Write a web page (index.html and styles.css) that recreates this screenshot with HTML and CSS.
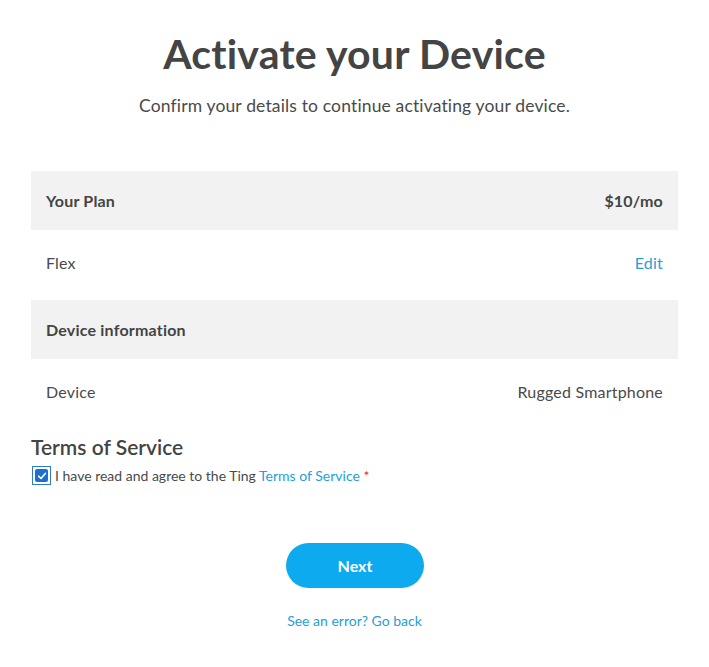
FILE: index.html
```html
<!DOCTYPE html>
<html>
<head>
<meta charset="utf-8">
<link rel="stylesheet" href="styles.css">
</head>
<body>
<main class="page">
  <h1 class="title">Activate your Device</h1>
  <p class="subtitle">Confirm your details to continue activating your device.</p>

  <section class="summary">
    <div class="row head"><span>Your Plan</span><span>$10/mo</span></div>
    <div class="row item"><span>Flex</span><a class="link" href="#">Edit</a></div>
    <div class="row head"><span>Device information</span></div>
    <div class="row item"><span>Device</span><span>Rugged Smartphone</span></div>
  </section>

  <section class="terms">
    <h2 class="terms-title">Terms of Service</h2>
    <label class="agree">
      <span class="check-outline"><span class="check-box"><svg viewBox="0 0 12 12" width="10" height="10"><path d="M2 6.3 L4.8 9 L10 3" fill="none" stroke="#fff" stroke-width="2" stroke-linecap="round" stroke-linejoin="round"/></svg></span></span>
      <span>I have read and agree to the Ting <a class="link" href="#">Terms of Service</a> <span class="req">*</span></span>
    </label>
  </section>

  <div class="actions">
    <button class="next">Next</button>
    <a class="back link" href="#">See an error? Go back</a>
  </div>
</main>
</body>
</html>
```
FILE: styles.css
```css
* { box-sizing: border-box; }
body {
  margin: 0;
  background: #fff;
  font-family: "Lato", "Open Sans", sans-serif;
  color: #474747;
}
.page {
  width: 647px;
  margin: 0 0 0 31px;
  padding-top: 28px;
  display: flex;
  flex-direction: column;
}
.title {
  margin: 0;
  text-align: center;
  font-size: 41px;
  font-weight: 700;
  line-height: 52px;
  color: #444;
  letter-spacing: 0.2px;
}
.subtitle {
  margin: 16px 0 0;
  text-align: center;
  font-size: 17.5px;
  letter-spacing: 0.15px;
  line-height: 20px;
  color: #4a4a4a;
}
.summary {
  margin-top: 55px;
  display: flex;
  flex-direction: column;
}
.row {
  display: flex;
  justify-content: space-between;
  align-items: center;
  padding: 0 15px;
  font-size: 16px;
  letter-spacing: 0.2px;
}
.row.head {
  background: #f2f2f2;
  height: 59px;
  font-weight: 700;
  color: #444;
}
.row.item {
  height: 70px;
  padding-bottom: 6px;
  color: #4a4a4a;
}
.link {
  color: #25a0d6;
  text-decoration: none;
}
.terms {
  margin-top: 5px;
}
.terms-title {
  margin: 0;
  font-size: 21px;
  font-weight: 600;
  line-height: 26px;
  color: #444;
}
.agree {
  margin-top: 6px;
  display: flex;
  align-items: center;
  gap: 4px;
  font-size: 14px;
  color: #4a4a4a;
  margin-left: 1px;
}
.check-outline {
  width: 19px;
  height: 19px;
  border: 1px solid #2c7fc4;
  display: flex;
  align-items: center;
  justify-content: center;
}
.check-box {
  width: 13px;
  height: 13px;
  background: #1c6fd0;
  border-radius: 2px;
  display: flex;
  align-items: center;
  justify-content: center;
}
.req { color: #d0321f; }
.actions {
  margin-top: 58px;
  display: flex;
  flex-direction: column;
  align-items: center;
}
.next {
  width: 138px;
  height: 45px;
  border: none;
  border-radius: 23px;
  background: #0daaf0;
  color: #fff;
  font-family: inherit;
  font-size: 16px;
  font-weight: 700;
  margin-left: 1px;
}
.back {
  margin-top: 25px;
  font-size: 14px;
  line-height: 16px;
}
```
